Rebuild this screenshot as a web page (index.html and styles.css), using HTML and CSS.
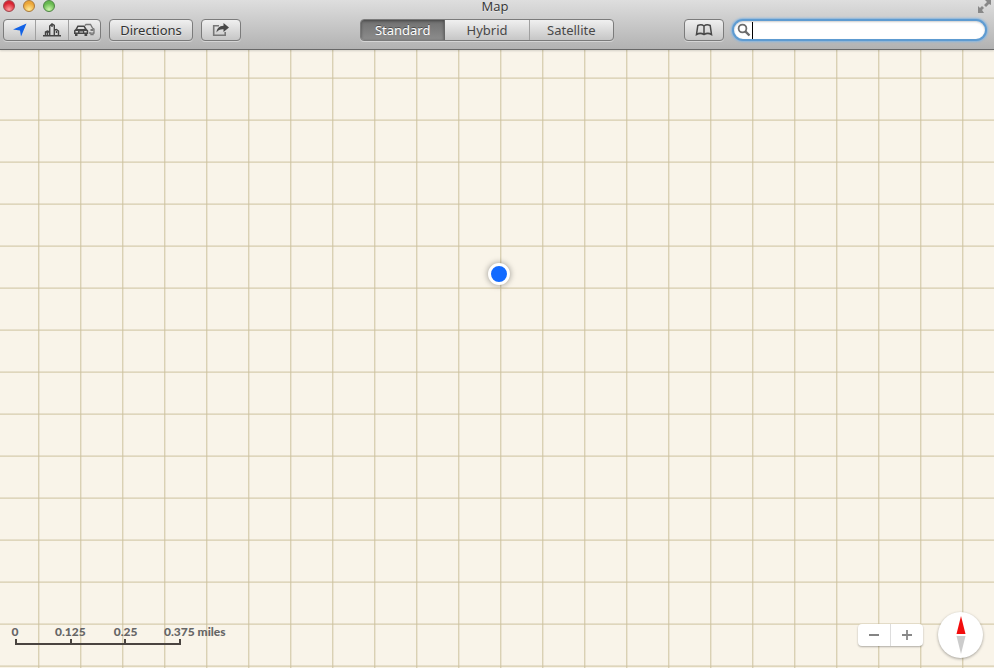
FILE: index.html
```html
<!DOCTYPE html>
<html lang="en">
<head>
<meta charset="utf-8">
<title>Map</title>
<link rel="stylesheet" href="styles.css">
</head>
<body>
<header class="chrome">
  <div class="titlebar">
    <div class="lights">
      <button class="light red" aria-label="Close"></button>
      <button class="light amber" aria-label="Minimize"></button>
      <button class="light green" aria-label="Zoom"></button>
    </div>
    <h1 class="title">Map</h1>
    <button class="fullscreen" aria-label="Full screen">
      <svg width="15" height="14" viewBox="0 0 15 14"><path fill="#888" d="M8 0h6v5l-2-1-3 3-2-2 3-3zM1 6l2 2 2-2 2 2-2 2 2 3H1z"/></svg>
    </button>
  </div>
  <div class="toolbar">
    <div class="tools">
      <div class="group icons">
        <button aria-label="Current location"><svg width="14" height="14" viewBox="0 0 14 14"><path fill="#1262e6" d="M13.500 .5 8 13.500 7 7.500 0 6.500z"/></svg></button>
        <button aria-label="3D buildings"><svg width="18" height="14" viewBox="0 0 18 14"><path fill="none" stroke="#444" stroke-width="1.400" d="M0 12.700h18M2.500 12V9l2-1 2 1M6.700 12V3L9 1l2.300 1.500V12M9 1v3M11.500 7l2-.5 2 1.500v4M4.500 8v4M13.500 8v2"/></svg></button>
        <button aria-label="Traffic"><svg width="21" height="14" viewBox="0 0 21 14"><path fill="none" stroke="#777" stroke-width="1.300" d="M11 2.500l1-1h4.500L18.500 5l1.500 1v4h-1v1.500h-2V10h-2"/><path fill="#777" d="M16.500 6h3v2h-3z"/><path fill="#484848" fill-rule="evenodd" d="M3.500 2.500h7L12.700 6l1.500 1.500V11h-1v2H10.500v-2h-7v2H1v-2H0V7.500L1.500 6zM4.300 4 3.300 6h7.400l-1-2zM1.500 8v1.500H4V8zm8.700 0v1.500h2.500V8zM5.500 8.500v1h3.500v-1z"/></svg></button>
      </div>
      <button class="group push directions">Directions</button>
      <button class="group push small" aria-label="Share"><svg width="18" height="14" viewBox="0 0 18 14"><path fill="none" stroke="#777" stroke-width="1.600" d="M7 2.700H1.700v9.600h11.500V9"/><path fill="#484848" d="M11.500 0l5.500 4.500L11.500 9V6.300C8 6.200 6.200 7 4.500 9.500 4.800 5.500 7 3 11.500 2.800z"/></svg></button>
    </div>
    <div class="group modes">
      <button class="active" aria-pressed="true">Standard</button>
      <button aria-pressed="false">Hybrid</button>
      <button aria-pressed="false">Satellite</button>
    </div>
    <div class="find">
      <button class="group push small" aria-label="Bookmarks"><svg width="18" height="14" viewBox="0 0 18 14"><path fill="none" stroke="#484848" stroke-width="1.500" d="M9 3C7.500 1.700 4.500 1.700 2.800 2.500L1.500 11.500C3.500 10.300 7 10.300 9 11.500 11 10.300 14.500 10.300 16.500 11.500L15.200 2.500C13.500 1.700 10.500 1.700 9 3zV12"/></svg></button>
      <label class="search">
        <svg width="14" height="14" viewBox="0 0 14 14"><circle cx="5.500" cy="5.500" r="3.900" fill="none" stroke="#6c6c6c" stroke-width="1.800"/><path stroke="#6c6c6c" stroke-width="2.400" d="M8.300 8.300l4.200 4.200"/></svg>
        <input type="text" aria-label="Search" autofocus>
        <span class="caret"></span>
      </label>
    </div>
  </div>
</header>
<main class="map">
  <div class="location"></div>
  <div class="scale">
    <div class="labels"><span>0</span><span>0.125</span><span>0.25</span><span class="last">0.375 miles</span></div>
    <div class="ruler"><i></i><i></i><i></i></div>
  </div>
  <div class="controls">
    <div class="zoom">
      <button aria-label="Zoom out"><svg width="12" height="12" viewBox="0 0 12 12"><path stroke="#777" stroke-width="1.800" d="M1 6h10"/></svg></button>
      <button aria-label="Zoom in"><svg width="12" height="12" viewBox="0 0 12 12"><path stroke="#888" stroke-width="1.800" d="M1 6h10M6 1v10"/></svg></button>
    </div>
    <button class="compass" aria-label="Compass"><svg width="10" height="40" viewBox="0 0 10 40"><path fill="#f20d0d" d="M5 1l4.500 18h-9z"/><path fill="#ccc" d="M.5 21h9L5 39z"/></svg></button>
  </div>
</main>
</body>
</html>
```
FILE: styles.css
```css
* { box-sizing: border-box; }
html, body { height: 100%; }
body {
  margin: 0;
  display: flex;
  flex-direction: column;
  overflow: hidden;
  font-family: "Noto Sans", "Open Sans", sans-serif;
  font-size: 13px;
  color: #333;
}
button {
  margin: 0;
  padding: 0;
  border: 0;
  background: none;
  font: inherit;
  color: inherit;
}
svg { display: block; }

.chrome {
  position: relative;
  z-index: 1;
  height: 50px;
  background: linear-gradient(#dedede, #b2b2b2);
  border-bottom: 1px solid #686868;
  box-shadow: 0 1px 2px rgba(0, 0, 0, .15);
}
.titlebar {
  display: grid;
  grid-template-columns: 1fr auto 1fr;
  align-items: start;
  height: 19px;
  padding: 0 2px 0 3px;
}
.lights { display: flex; gap: 8px; }
.light {
  width: 12px;
  height: 12px;
  border-radius: 50%;
  border: 1px solid;
}
.red { background: radial-gradient(circle at 50% 85%, #ff9d9d, #d92332 65%); border-color: #a0444c; }
.amber { background: radial-gradient(circle at 50% 85%, #ffe994, #eca637 65%); border-color: #a9793c; }
.green { background: radial-gradient(circle at 50% 85%, #caf5a8, #66b94e 65%); border-color: #4e8345; }
.title {
  margin: 0;
  padding-right: 5px;
  font-family: "Open Sans", sans-serif;
  font-size: 13px;
  font-weight: 400;
  line-height: 13px;
  text-shadow: 0 1px 0 rgba(255, 255, 255, .5);
}
.fullscreen { justify-self: end; }

.toolbar {
  display: flex;
  gap: 70px;
  padding: 0 7px 0 3px;
}
.tools, .find { display: flex; gap: 8px; }
.tools { flex: 1; }
.group {
  height: 22px;
  border: 1px solid #7b7b7b;
  border-radius: 4px;
  background: linear-gradient(#f0f0f0, #c6c6c6);
  box-shadow: 0 1px 0 rgba(255, 255, 255, .4);
  text-shadow: 0 1px 0 rgba(255, 255, 255, .5);
}
.group button, .push {
  display: flex;
  align-items: center;
  justify-content: center;
  line-height: 20px;
}
.icons, .modes { display: flex; overflow: hidden; }
.icons { width: 98px; }
.icons button { flex: 1; }
.modes { width: 254px; }
.modes button { flex: 1; color: #484848; }
.icons button + button, .modes button + button { border-left: 1px solid #a0a0a0; }
.modes .active {
  color: #fff;
  background: linear-gradient(#707070, #8c8c8c);
  box-shadow: inset 0 1px 3px rgba(0, 0, 0, .4);
  text-shadow: 0 -1px 0 rgba(0, 0, 0, .4);
}
.modes .active + button { border-left-color: #666; }
.directions { width: 84px; }
.small { width: 40px; }
.find { width: 303px; }
.search {
  flex: 1;
  display: flex;
  align-items: center;
  height: 22px;
  padding-left: 3px;
  border: 2px solid #5e9bd1;
  border-radius: 11px;
  background: #fff;
  box-shadow: 0 0 2px 1px #87b5df, inset 0 1px 2px rgba(0, 0, 0, .2);
  position: relative;
}
.search input {
  flex: 1;
  min-width: 0;
  height: 18px;
  margin: 0;
  padding: 0 4px 0 2px;
  border: 0;
  outline: 0;
  background: none;
  font: inherit;
  caret-color: transparent;
}
.caret {
  position: absolute;
  left: 18px;
  top: 1px;
  width: 1px;
  height: 17px;
  background: #000;
}

.map {
  flex: 1;
  position: relative;
  overflow: hidden;
  background:
    linear-gradient(90deg, rgba(205, 194, 158, .7) 1px, rgba(205, 194, 158, .3) 1px, rgba(205, 194, 158, .3) 2px, transparent 2px) 38px 0 / 42px 42px,
    linear-gradient(rgba(205, 194, 158, .4) 1px, rgba(205, 194, 158, .6) 1px, rgba(205, 194, 158, .6) 2px, transparent 2px) 0 27px / 42px 42px,
    #f9f4e9;
}
.location {
  position: absolute;
  left: 499px;
  top: 224px;
  width: 22px;
  height: 22px;
  margin: -11px;
  border: 3px solid #fff;
  border-radius: 50%;
  background: #126aff;
  box-shadow: 0 0 6px rgba(0, 0, 0, .4);
}
.scale {
  position: absolute;
  left: 15px;
  bottom: 23px;
  width: 166px;
  color: #666;
  font-family: Lato, sans-serif;
  font-size: 12px;
  font-weight: 900;
  line-height: 14px;
}
.labels { display: grid; grid-template-columns: repeat(3, 1fr) 0; }
.labels span { justify-self: start; transform: translateX(-50%); white-space: nowrap; }
.labels .last { transform: translateX(-17px); }
.ruler {
  display: grid;
  grid-template-columns: repeat(3, 1fr);
  height: 6px;
  border: solid #4a4440;
  border-width: 0 0 2px 2px;
}
.ruler i { height: 5px; border-right: 2px solid #4a4440; }
.controls {
  position: absolute;
  right: 11px;
  bottom: 10px;
  display: flex;
  align-items: center;
  gap: 15px;
}
.zoom {
  display: flex;
  width: 65px;
  height: 22px;
  border-radius: 4px;
  background: #fff;
  box-shadow: 0 1px 2px rgba(0, 0, 0, .3);
}
.zoom button { flex: 1; display: flex; align-items: center; justify-content: center; }
.zoom button + button { border-left: 1px solid #ddd; }
.compass {
  display: flex;
  align-items: center;
  justify-content: center;
  width: 45px;
  height: 46px;
  border-radius: 50%;
  background: #fff;
  box-shadow: 0 1px 3px rgba(0, 0, 0, .35);
}
```
